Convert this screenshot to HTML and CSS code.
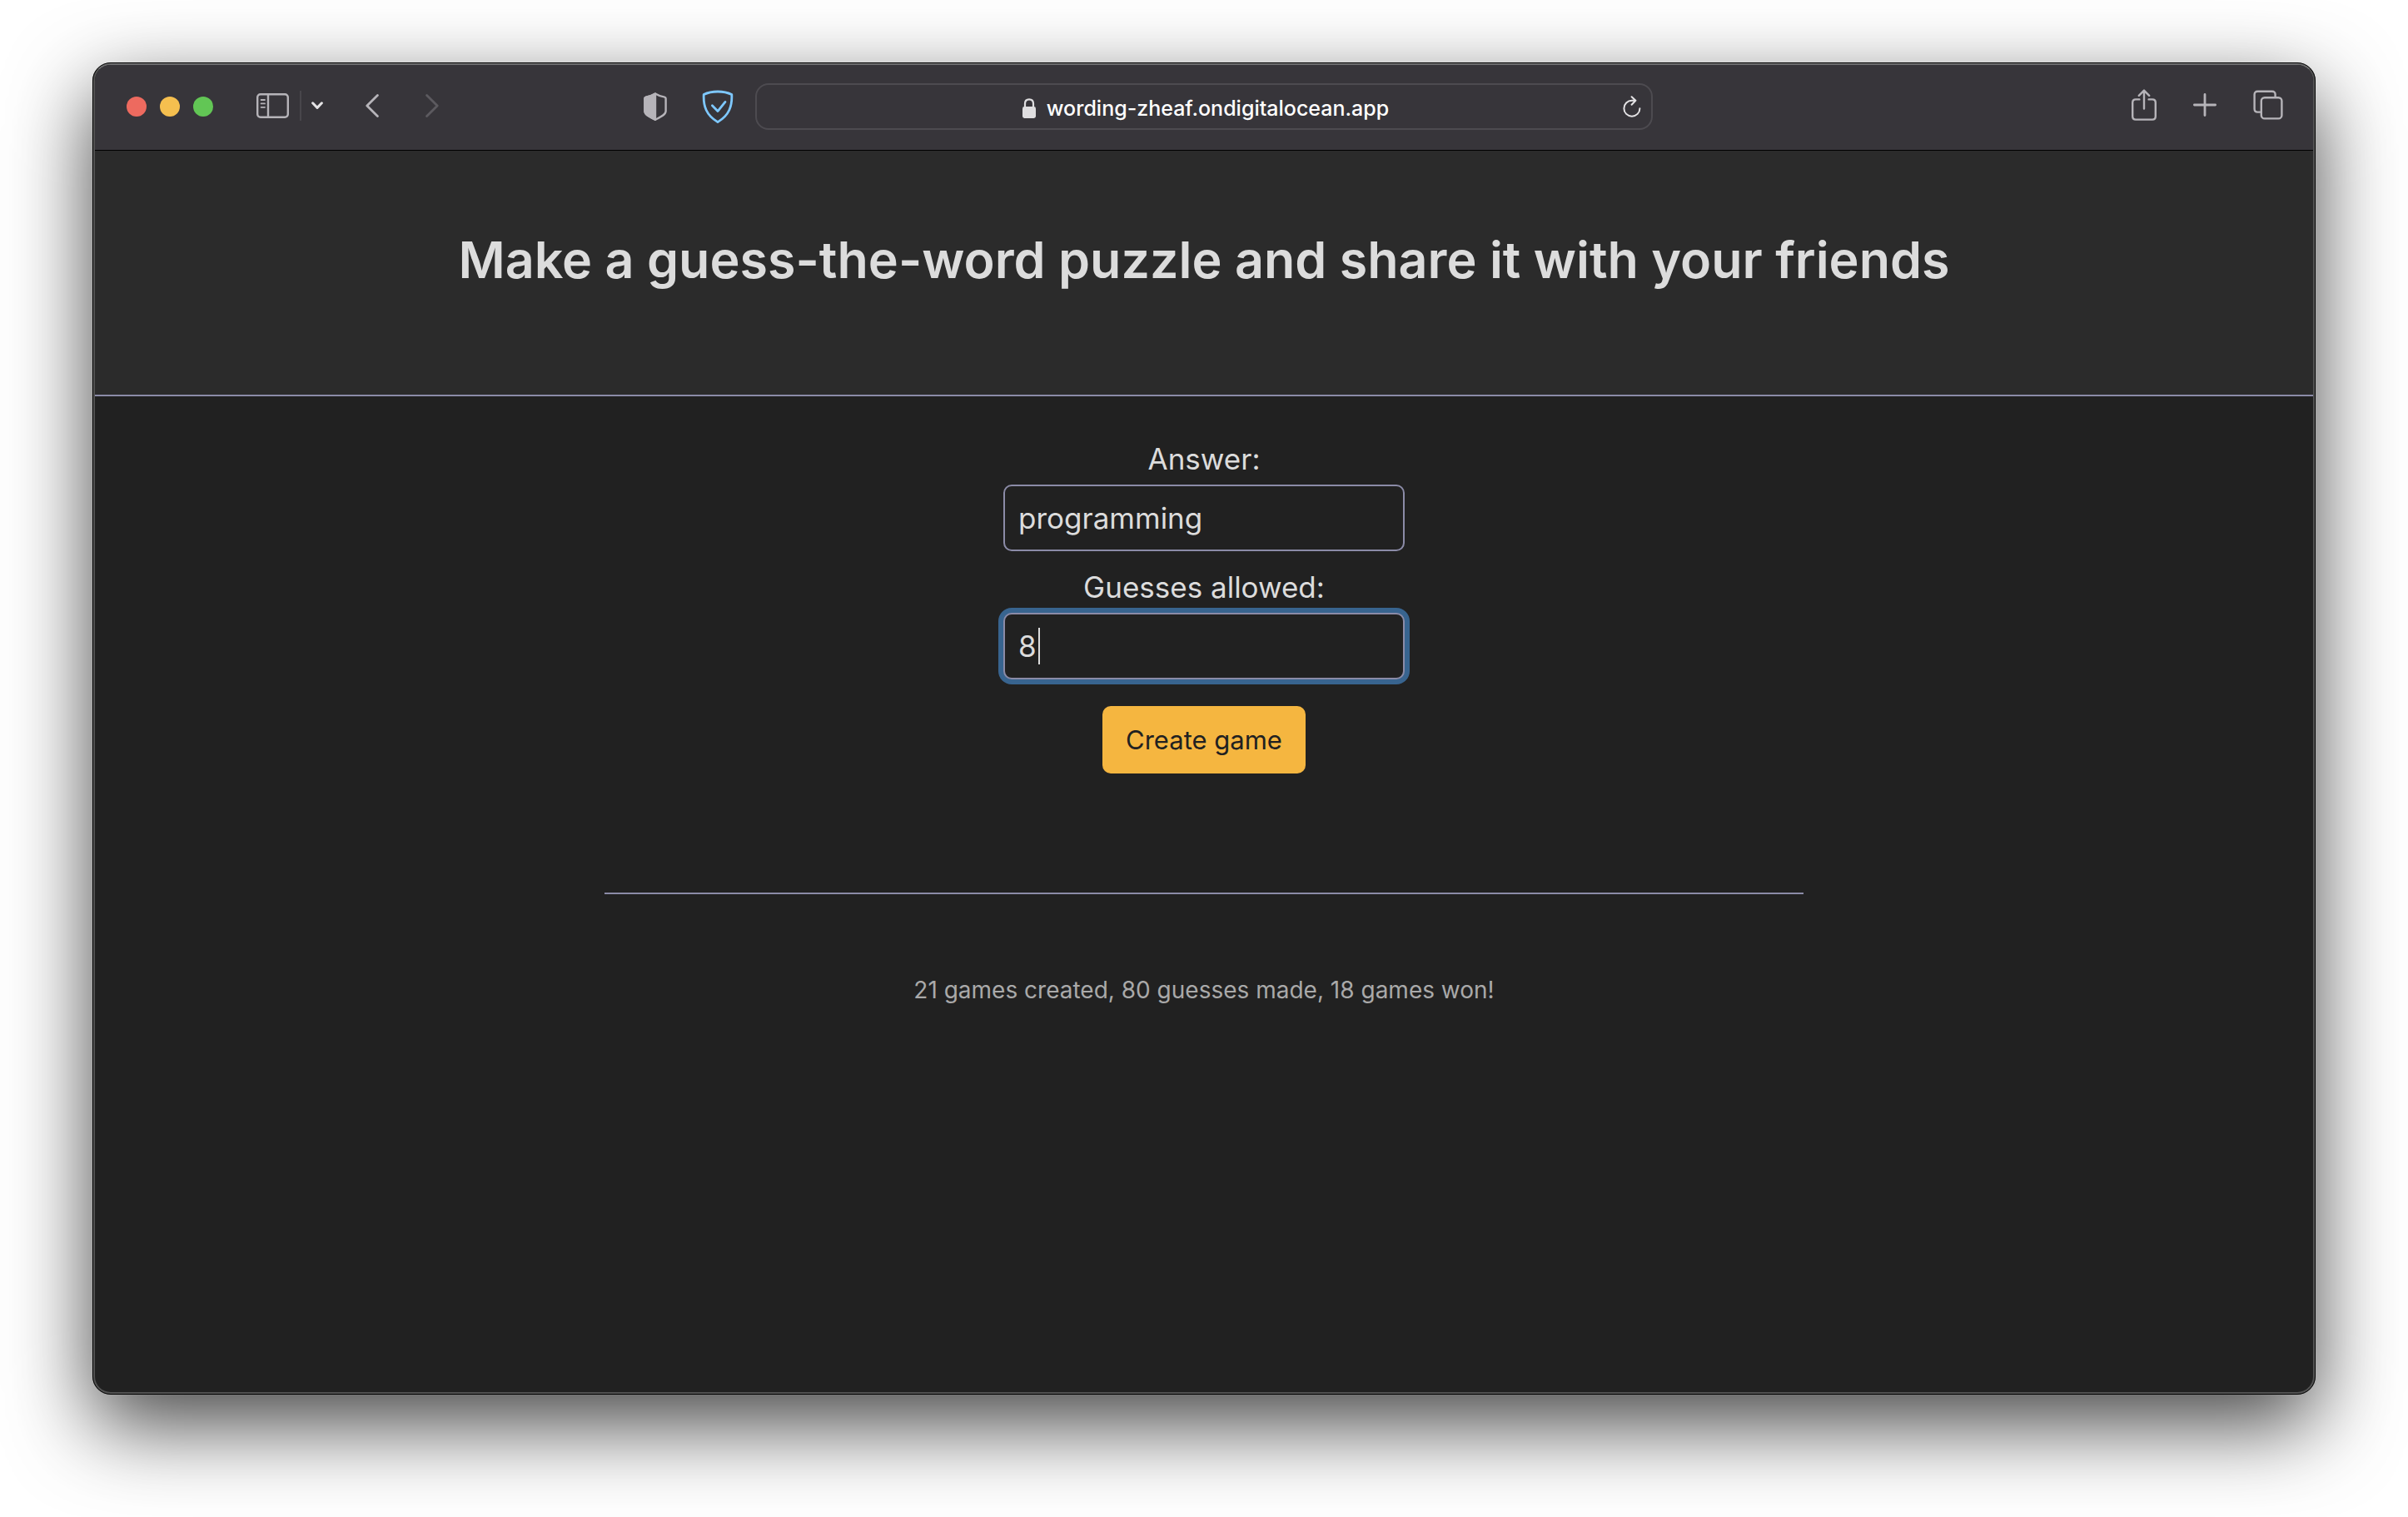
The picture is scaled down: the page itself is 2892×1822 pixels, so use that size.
FILE: index.html
```html
<!DOCTYPE html>
<html lang="en">
<head>
<meta charset="utf-8">
<title>Make a guess-the-word puzzle</title>
<link rel="stylesheet" href="styles.css">
</head>
<body>
<div class="window">
  <div class="toolbar">
    <div class="toolbar-left">
      <div class="lights">
        <button class="light light-close" type="button" aria-label="Close"></button>
        <button class="light light-minimize" type="button" aria-label="Minimize"></button>
        <button class="light light-zoom" type="button" aria-label="Zoom"></button>
      </div>
      <div class="sidebar-tools">
        <button class="tool" type="button" aria-label="Show sidebar">
          <svg width="40" height="32" viewBox="0 0 40 32" fill="none" stroke="currentColor" stroke-width="2.4" stroke-linecap="round">
            <rect x="1.2" y="2.2" width="36.6" height="27.6" rx="3.6"/>
            <path d="M14 2.2v27.6"/>
            <path d="M5.6 9h4.4M5.6 13.4h4.4M5.6 17.8h4.4" stroke-width="1.8"/>
          </svg>
        </button>
        <span class="divider"></span>
        <button class="tool tool-bright" type="button" aria-label="Tab groups">
          <svg width="14" height="10" viewBox="0 0 14 10" fill="none" stroke="currentColor" stroke-width="3" stroke-linecap="round" stroke-linejoin="round"><path d="M1.6 1.8 7 7.4l5.4-5.6"/></svg>
        </button>
      </div>
      <div class="history">
        <button class="tool" type="button" aria-label="Back">
          <svg width="16" height="28" viewBox="0 0 16 28" fill="none" stroke="currentColor" stroke-width="2.8" stroke-linecap="round" stroke-linejoin="round"><path d="M14.4 1.6 1.8 14l12.6 12.4"/></svg>
        </button>
        <button class="tool tool-dim" type="button" aria-label="Forward" disabled>
          <svg width="16" height="28" viewBox="0 0 16 28" fill="none" stroke="currentColor" stroke-width="2.8" stroke-linecap="round" stroke-linejoin="round"><path d="M1.6 1.6 14.2 14 1.6 26.4"/></svg>
        </button>
      </div>
      <div class="shields">
        <button class="tool" type="button" aria-label="Privacy report">
          <svg width="28" height="34" viewBox="0 0 28 34" fill="none" stroke="currentColor" stroke-width="2.4" stroke-linejoin="round">
            <path d="M14 1.6C17 3.6 21.500 5 25.200 5.600c1 .2 1.400.6 1.400 1.600v15.400c0 4.400-7 7.400-12.600 10.200C8.400 30 1.400 27 1.400 22.600V7.200c0-1 .4-1.400 1.400-1.600C6.500 5 11 3.600 14 1.600Z"/>
            <path d="M14 1.6v31.200C8.400 30 1.400 27 1.400 22.600V7.200c0-1 .4-1.400 1.400-1.600C6.500 5 11 3.600 14 1.600Z" fill="currentColor"/>
          </svg>
        </button>
        <button class="tool tool-blue" type="button" aria-label="Tracking protection">
          <svg width="38" height="40" viewBox="0 0 38 40" fill="none" stroke="currentColor" stroke-width="2.8" stroke-linecap="round" stroke-linejoin="round">
            <path d="M19 2c6 0 12 1.200 16.800 3.600.6 14-3 24.800-16.800 33C5.200 30.400 1.600 19.600 2.200 5.600 7 3.200 13 2 19 2Z"/>
            <path d="M12.400 18.800l6.600 6.800 9-11.200"/>
          </svg>
        </button>
      </div>
    </div>

    <div class="address">
      <a class="address-link" href="#game">
        <svg width="16" height="24" viewBox="0 0 16 24"><path d="M3 12V6.500C3 3.400 5 1.400 8 1.400s5 2 5 5.100V12" fill="none" stroke="#dfdee0" stroke-width="2.200"/><rect y="10" width="16" height="14" rx="2.400" fill="#dfdee0"/></svg>
        <span>wording-zheaf.ondigitalocean.app</span>
      </a>
      <button class="tool tool-bright" type="button" aria-label="Reload">
        <svg width="22" height="26" viewBox="0 0 22 26" fill="none" stroke="currentColor" stroke-width="2" stroke-linecap="round" stroke-linejoin="round"><path d="M20.400 15.200a9.500 9.500 0 1 1-9.500-9.500h4.300M10.600 1.300l4.800 4.500-4.800 5"/></svg>
      </button>
    </div>

    <div class="toolbar-right">
      <button class="tool" type="button" aria-label="Share">
        <svg width="30" height="38" viewBox="0 0 30 38" fill="none" stroke="currentColor" stroke-width="2.400" stroke-linecap="round" stroke-linejoin="round"><path d="M9.400 12.400H5c-2.500 0-3.800 1.300-3.800 3.800v16.600c0 2.500 1.300 3.800 3.800 3.800h20c2.500 0 3.800-1.300 3.800-3.800V16.200c0-2.500-1.300-3.800-3.800-3.800h-4.400M15 23.600V2M8.800 7.800 15 1.600l6.200 6.200"/></svg>
      </button>
      <button class="tool" type="button" aria-label="New tab">
        <svg width="28" height="28" viewBox="0 0 28 28" fill="none" stroke="currentColor" stroke-width="2.800" stroke-linecap="round"><path d="M14 1.400v25.200M1.400 14h25.200"/></svg>
      </button>
      <button class="tool" type="button" aria-label="Show all tabs">
        <svg width="36" height="36" viewBox="0 0 36 36" fill="none" stroke="currentColor" stroke-width="2.400"><rect x="9.800" y="9.200" width="24.600" height="25.200" rx="4"/><path d="M26.600 9V5.600c0-2.500-1.300-3.800-3.800-3.800H5.400c-2.500 0-3.800 1.300-3.800 3.800v17.200c0 2.500 1.300 3.800 3.800 3.800h4.200"/></svg>
      </button>
    </div>
  </div>

  <header class="hero">
    <h1 class="title">Make a guess-the-word puzzle and share it with your friends</h1>
  </header>

  <main class="content" id="game">
    <form class="game-form">
      <div class="field">
        <label class="label" for="answer">Answer:</label>
        <input class="input" id="answer" type="text" value="programming">
      </div>
      <div class="field">
        <label class="label" for="guesses">Guesses allowed:</label>
        <div class="input-wrap">
          <input class="input input-active" id="guesses" type="text" inputmode="numeric" value="8">
          <span class="caret"></span>
        </div>
      </div>
      <button class="submit" type="button">Create game</button>
    </form>
    <hr class="rule">
    <p class="stats">21 games created, 80 guesses made, 18 games won!</p>
  </main>
</div>
</body>
</html>
```
FILE: styles.css
```css
* { box-sizing: border-box; }

body {
  display: flex;
  min-height: 100vh;
  margin: 0;
  padding: 75px 111px 147px;
  background: #fff;
  color: #dcdcdc;
  font-family: Inter, "Liberation Sans", sans-serif;
}

button, input { font-family: inherit; }

svg { display: block; }

.window {
  display: flex;
  flex: 1;
  flex-direction: column;
  min-width: 0;
  overflow: hidden;
  border: 3px solid #525252;
  border-top-color: #6e6e6f;
  border-radius: 22px;
  outline: 1px solid #000;
  outline-offset: -1px;
  background: #212121;
  box-shadow: 0 36px 100px rgba(0, 0, 0, 0.73);
}

/* Browser toolbar */
.toolbar {
  display: grid;
  grid-template-columns: minmax(0, 1fr) minmax(0, 1078px) minmax(0, 1fr);
  align-items: center;
  height: 103px;
  padding-bottom: 2px;
  border-bottom: 1px solid #000;
  background: #37353a;
}

.toolbar-left {
  display: flex;
  align-items: center;
  padding: 0 26px 0 38px;
}

.lights { display: flex; gap: 16px; }

.light {
  width: 24px;
  height: 24px;
  padding: 0;
  border: 0;
  border-radius: 50%;
}

.light-close { background: #ed6a5f; }
.light-minimize { background: #f5bf4f; }
.light-zoom { background: #62c655; }

.tool {
  flex: none;
  padding: 0;
  border: 0;
  background: none;
  color: #b6b4b9;
}

.tool-bright { color: #e4e3e5; }
.tool-dim { color: #5c5a5f; }
.tool-blue { color: #7ec8ff; }

.sidebar-tools {
  display: flex;
  align-items: center;
  gap: 12px;
  margin-left: 52px;
  padding-bottom: 2px;
}

.divider {
  width: 2px;
  height: 36px;
  background: #48464b;
}

.history {
  display: flex;
  gap: 56px;
  margin-left: 51px;
  padding-bottom: 2px;
}

.shields {
  display: flex;
  align-items: center;
  gap: 42px;
  margin-left: auto;
}

.address {
  display: flex;
  align-items: center;
  height: 56px;
  padding: 0 12px 0 38px;
  border: 2px solid #4d4b50;
  border-radius: 16px;
}

.address-link {
  display: flex;
  flex: 1;
  align-items: center;
  justify-content: center;
  gap: 13px;
  padding-top: 4px;
  color: #fff;
  font-size: 25px;
  font-weight: 500;
  line-height: 32px;
  text-decoration: none;
}

.toolbar-right {
  display: flex;
  align-items: center;
  justify-content: flex-end;
  gap: 44px;
  padding: 0 36px 4px 0;
}

/* Page */
.hero {
  padding: 93px 48px 124px;
  border-bottom: 2px solid #8b8ba7;
  background: #2b2b2b;
}

.title {
  margin: 0;
  font-size: 61px;
  font-weight: 600;
  line-height: 76px;
  text-align: center;
}

.content {
  display: flex;
  flex-direction: column;
  align-items: center;
  padding: 48px;
}

.game-form {
  display: flex;
  flex-direction: column;
  align-items: center;
  gap: 16px;
  width: 100%;
  max-width: 482px;
}

.field {
  display: flex;
  flex-direction: column;
  gap: 4px;
  width: 100%;
}

.label {
  font-size: 35px;
  line-height: 54px;
  text-align: center;
}

.input-wrap { position: relative; }

.input {
  display: block;
  width: 100%;
  height: 80px;
  padding: 0 16px;
  border: 2px solid #8b8ba7;
  border-radius: 10px;
  outline: none;
  background: #212121;
  color: #dcdcdc;
  font-size: 35px;
}

.input-active,
.input:focus { box-shadow: 0 0 0 6px #38648f; }

.caret {
  position: absolute;
  top: 18px;
  left: 42px;
  width: 2px;
  height: 44px;
  background: #dcdcdc;
}

.submit {
  height: 81px;
  margin-top: 16px;
  padding: 0 28px;
  border: 0;
  border-radius: 10px;
  background: #f5b640;
  color: #212121;
  font-size: 31px;
}

.rule {
  width: 100%;
  max-width: 1440px;
  height: 2px;
  margin: 143px 0 94px;
  border: 0;
  background: #8b8ba7;
}

.stats {
  margin: 0;
  color: #a9a9a9;
  font-size: 28px;
  line-height: 42px;
}
```
